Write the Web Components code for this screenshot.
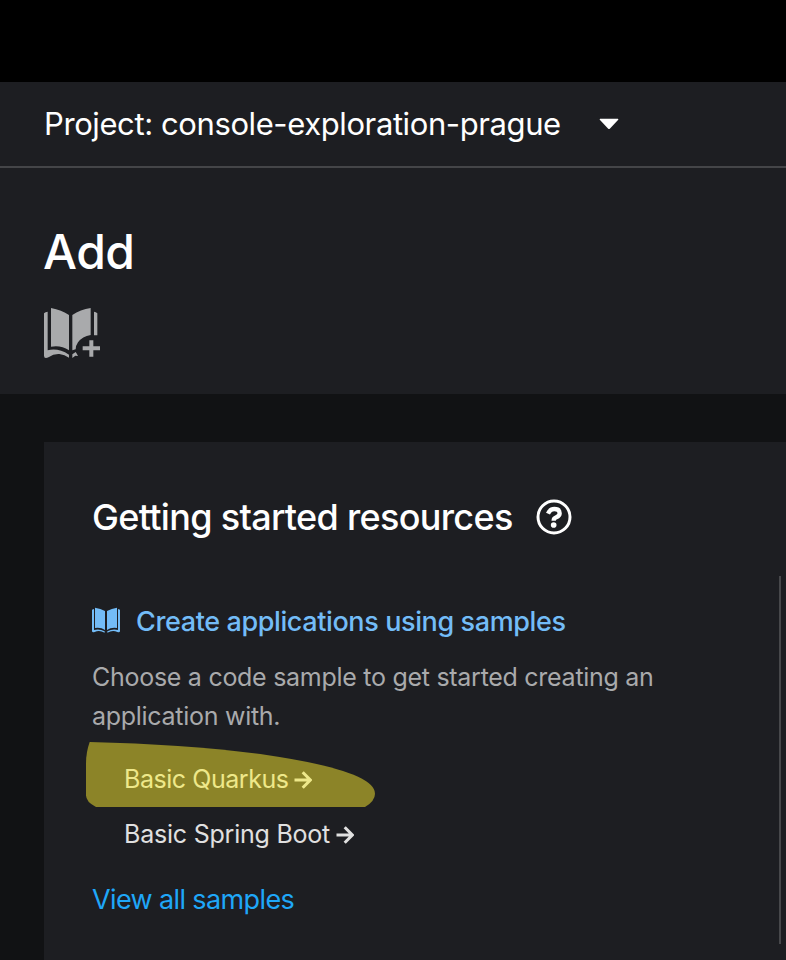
<!DOCTYPE html>
<html lang="en">
<head>
<meta charset="utf-8">
<title>Add</title>
<style>
html, body { margin: 0; background: #000; }
body { width: 786px; height: 960px; overflow: hidden; font-family: Inter, "Liberation Sans", sans-serif; color: #fff; }
</style>
</head>
<body>
<console-page></console-page>
<script>
const define = (name, html) => {
  const t = document.createElement('template');
  t.innerHTML = html;
  customElements.define(name, class extends HTMLElement {
    constructor() {
      super();
      this.attachShadow({ mode: 'open' }).append(t.content.cloneNode(true));
    }
  });
};

define('project-bar', `
<style>
:host { display: flex; align-items: center; box-sizing: border-box; height: 86px; padding: 0 44px; border-bottom: 2px solid #444548; background: #1d1e22; font-size: 31px; line-height: 84px; white-space: nowrap; }
span { width: 555px; letter-spacing: -0.4px; }
svg { display: block; }
</style>
<span><slot></slot></span>
<svg width="20" height="12" viewBox="0 0 20 12"><path d="M1.2 0.7H18.8Q20 1 19 2.1L11 10.6Q10 11.6 9 10.6L1 2.1Q0 1 1.2 .7Z" fill="#fff"/></svg>`);

define('page-heading', `
<style>
:host { display: block; box-sizing: border-box; height: 226px; padding: 54px 44px 0; background: #1d1e22; }
h1 { margin: 0 0 25px -1px; font-size: 48px; font-weight: 500; line-height: 60px; letter-spacing: -0.5px; }
svg { display: block; }
</style>
<h1><slot></slot></h1>
<svg width="57" height="52" viewBox="42 261 171 156" fill="#a9aaac">
<path d="M42 280Q46 276 53 275V391Q84 383 117 404V413Q104 404 88 402Q70 401 57 411Q42 418 42 407Z"/>
<path d="M63 264Q95 270 117 285V391Q92 374 63 380Z"/>
<path d="M127 285Q151 269 182 264V345Q157 349 144 367Q137 377 137 388L127 391Z"/>
<path d="M192 275Q198 276 202 280V346H192Z"/>
<path d="M127 403L137 396Q141 402 144 408L136 407L127 414Z"/>
<path d="M178 361H190V379H210V391H190V410H178V391H158V379H178Z"/>
</svg>`);

define('help-icon', `
<style>:host { display: block; } svg { display: block; }</style>
<svg width="36" height="36" viewBox="618 26 108 108" fill="none" stroke="#fff">
<circle cx="672" cy="80" r="48" stroke-width="9"/>
<path d="M654 70Q660 56 673 56Q689 56 689 69Q689 77 679 81Q671 84 671 91" stroke-width="13"/>
<circle cx="671" cy="104" r="8.5" fill="#fff" stroke="none"/>
</svg>`);

define('resource-card', `
<style>
:host { display: block; box-sizing: border-box; height: 518px; margin: 48px 0 0 44px; padding: 48px 5px 0 48px; background: #1d1e22; }
header { display: flex; align-items: center; height: 54px; margin-bottom: 32px; }
h2 { width: 444px; margin: 0; font-size: 36px; font-weight: 500; line-height: 54px; letter-spacing: -0.68px; white-space: nowrap; }
section { box-sizing: border-box; height: 368px; padding-top: 24px; border-right: 2px solid #47484b; }
</style>
<header><h2><slot name="title"></slot></h2><help-icon></help-icon></header>
<section><slot></slot></section>`);

define('sample-title', `
<style>
:host { display: flex; align-items: center; gap: 16px; height: 43px; color: #73bcf7; font-size: 27px; font-weight: 500; letter-spacing: -0.39px; white-space: nowrap; }
svg { display: block; margin-bottom: 3px; }
</style>
<svg width="28" height="26" viewBox="36 54 84 78" fill="#73bcf7">
<path d="M36 62L42 60V123Q58 118 74 127V131Q58 122 44 129Q36 131 36 126Z"/>
<path d="M45 56Q62 58 75 66V123Q62 114 45 117Z"/>
<path d="M81 66Q95 58 111 56V117Q94 114 81 123Z"/>
<path d="M120 62L114 60V123Q98 118 82 127V131Q98 122 112 129Q120 131 120 126Z"/>
</svg>
<span><slot></slot></span>`);

define('sample-text', `
<style>
:host { display: block; height: 78px; margin: 15px 0 15px; color: #a9aaac; font-size: 25px; line-height: 39px; white-space: nowrap; letter-spacing: -0.28px; }
</style><slot></slot>`);

define('sample-link', `
<style>
:host { display: flex; align-items: center; height: 55px; padding-left: 32px; position: relative; color: #e0e0e0; font-size: 25px; white-space: nowrap; }
:host([marked]) { color: #eee88a; }
span { position: relative; width: var(--w); letter-spacing: var(--track, 0); }
.arrow { position: relative; display: block; margin-top: 3px; }
.mark { display: none; position: absolute; left: -6px; top: -9px; }
:host([marked]) .mark { display: block; }
</style>
<svg class="mark" width="289" height="65" viewBox="18 36 867 195" preserveAspectRatio="none"><path d="M29 36Q330 43 560 75Q885 123 885 191Q885 213 855 231H48Q18 216 18 196V100Q18 67 29 36Z" fill="#8c8428"/></svg>
<span><slot></slot></span>
<svg class="arrow" width="18" height="18" viewBox="0 0 18 18" fill="none" stroke="currentColor" stroke-width="3"><path d="M.5 9H16M8.7 1.2L16.3 9L8.7 16.8"/></svg>`);

define('view-all', `
<style>
:host { display: block; margin-top: 20px; color: #1fa7f8; font-size: 27px; line-height: 38px; letter-spacing: -0.62px; white-space: nowrap; }
</style><slot></slot>`);

define('console-page', `
<style>
:host { display: block; width: 786px; height: 878px; padding-top: 82px; background: #000; overflow: hidden; }
main { display: flow-root; height: 566px; background: #111214; }
</style>
<project-bar>Project: console-exploration-prague</project-bar>
<page-heading>Add</page-heading>
<main>
<resource-card>
<span slot="title">Getting started resources</span>
<sample-title>Create applications using samples</sample-title>
<sample-text>Choose a code sample to get started creating an<br>application with.</sample-text>
<sample-link marked style="--w:170px;--track:-0.45px">Basic Quarkus</sample-link>
<sample-link style="--w:212px;--track:-0.22px">Basic Spring Boot</sample-link>
<view-all>View all samples</view-all>
</resource-card>
</main>`);
</script>
</body>
</html>
